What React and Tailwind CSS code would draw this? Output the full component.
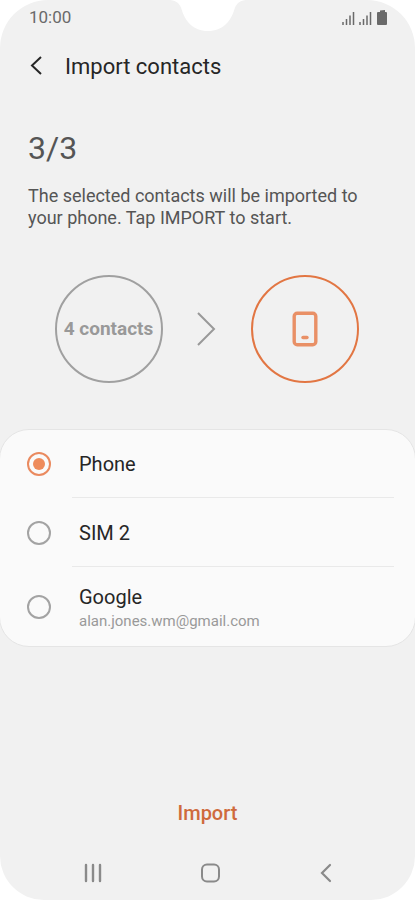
import { useState } from "react"

const accounts = [
    { id: 'phone', name: 'Phone', row: 'h-[68px]' },
    { id: 'sim2', name: 'SIM 2', row: 'h-[69px] pt-px' },
    { id: 'google', name: 'Google', email: 'alan.jones.wm@gmail.com', row: 'h-[79px] pt-1' },
]

function StatusBar() {
    return (
        <div className="relative flex items-center justify-between h-9 pl-[29px] pr-7 text-[#6a6a6a]">
            <span className="text-[17px]">10:00</span>
            {/* camera notch */}
            <svg className="absolute top-0 left-1/2 -translate-x-1/2" width="80" height="32" viewBox="0 0 80 32" fill="#fff" aria-hidden="true">
                <path d="M0 0C7 0 11 2 13.500 9C17 21 25 31 40 31C55 31 63 21 66.500 9C69 2 73 0 80 0Z" />
            </svg>
            <div className="flex items-end gap-1 pb-0.5">
                <Signal />
                <Signal />
                <svg className="ml-px" width="10" height="15" viewBox="0 0 10 15" fill="currentColor" aria-hidden="true">
                    <path d="M3 0.500L8 0V2H9A1 1 0 0 1 10 3V14A1 1 0 0 1 9 15H1A1 1 0 0 1 0 14V3A1 1 0 0 1 1 2H3Z" />
                </svg>
            </div>
        </div>
    )
}

function Signal() {
    return (
        <svg width="13" height="14" viewBox="0 0 13 14" stroke="currentColor" strokeWidth="1.500" aria-hidden="true">
            <path d="M1 11V14M4.500 8V14M8 4.500V14M11.500 1V14" />
        </svg>
    )
}

function AccountOption({ account, checked, last, onSelect }) {
    return (
        <label className="flex items-center cursor-pointer">
            <span className="w-[72px] pl-[27px] flex shrink-0">
                <input
                    type="radio"
                    name="account"
                    value={account.id}
                    checked={checked}
                    onChange={() => onSelect(account.id)}
                    className="appearance-none grid place-content-center size-6 rounded-full border-2 border-[#a3a3a3] checked:border-[#ea8a5f] before:size-3 before:rounded-full checked:before:bg-[#ee8b5b]"
                />
            </span>
            <span className={`${account.row} ${last ? '' : 'border-b border-[#e9e9e9]'} flex-1 flex flex-col justify-center mr-[21px] pl-[7px]`}>
                <span className="text-xl leading-6 text-[#262626]">{account.name}</span>
                {account.email && <span className="text-[15px] leading-6 text-[#999]">{account.email}</span>}
            </span>
        </label>
    )
}

export default function App() {
    const [selected, setSelected] = useState('phone')

    return (
        <div className="min-h-screen bg-white font-[Roboto,sans-serif]">
            <div className="min-h-screen flex flex-col bg-[#f1f1f1] rounded-t-[48px] rounded-b-[44px]">
                <StatusBar />
                <header className="flex items-center h-15 pl-[29px] gap-[21px] text-[#262626]">
                    <button aria-label="Back">
                        <svg width="15" height="20" viewBox="0 0 15 20" fill="none" stroke="currentColor" strokeWidth="2">
                            <path d="M12 1L3 9.500L12 18" />
                        </svg>
                    </button>
                    <h1 className="text-[22px]">Import contacts</h1>
                </header>

                <main className="flex-1 flex flex-col">
                    <div className="px-7 pt-8 text-[#555]">
                        <h2 className="text-[32px] leading-10">3/3</h2>
                        <p className="mt-[17px] text-lg leading-[22px]">The selected contacts will be imported to your phone. Tap IMPORT to start.</p>
                    </div>

                    <div className="flex items-center justify-center gap-8 mt-[46px] pr-0.5">
                        <div className="size-27 rounded-full border-2 border-[#a0a0a0] flex items-center justify-center">
                            <span className="text-[19px] font-bold text-[#999] whitespace-nowrap">4 contacts</span>
                        </div>
                        <svg width="24" height="34" viewBox="0 0 24 34" fill="none" stroke="#999" strokeWidth="2" aria-hidden="true">
                            <path d="M3 1L19 17L3 33" />
                        </svg>
                        <div className="size-27 rounded-full border-2 border-[#e27643] flex items-center justify-center">
                            <svg width="26" height="36" viewBox="0 0 26 36" fill="none" stroke="#e99066" strokeWidth="3.400" strokeLinecap="round" aria-hidden="true">
                                <rect x="2.200" y="2.200" width="21.600" height="31.600" rx="3" />
                                <path d="M11 26.500H15" />
                            </svg>
                        </div>
                    </div>

                    <div role="radiogroup" aria-label="Import contacts to" className="mt-[46px] rounded-[30px] border border-[#e5e5e5] -mx-px bg-[#fafafa]">
                        {accounts.map((account, i) => (
                            <AccountOption
                                key={account.id}
                                account={account}
                                checked={selected === account.id}
                                last={i === accounts.length - 1}
                                onSelect={setSelected}
                            />
                        ))}
                    </div>
                </main>

                <div className="flex justify-center pb-2.5">
                    <button className="px-6 py-2 text-xl font-medium text-[#cf6a3c]">Import</button>
                </div>

                <nav className="flex items-center justify-between h-[55px] pl-20 pr-[79px] text-[#8a8a8a]">
                    <button aria-label="Recent apps">
                        <svg width="26" height="20" viewBox="0 0 26 20" stroke="currentColor" strokeWidth="2.400" strokeLinecap="round">
                            <path d="M6 2V18M13 2V18M20 2V18" />
                        </svg>
                    </button>
                    <button aria-label="Home">
                        <svg width="20" height="20" viewBox="0 0 20 20" fill="none" stroke="currentColor" strokeWidth="2">
                            <rect x="1" y="1.500" width="17" height="17" rx="5" />
                        </svg>
                    </button>
                    <button aria-label="Back to previous screen">
                        <svg width="20" height="20" viewBox="0 0 20 20" fill="none" stroke="currentColor" strokeWidth="2.200" strokeLinecap="round">
                            <path d="M14 2L6 10L14 18" />
                        </svg>
                    </button>
                </nav>
            </div>
        </div>
    )
}
